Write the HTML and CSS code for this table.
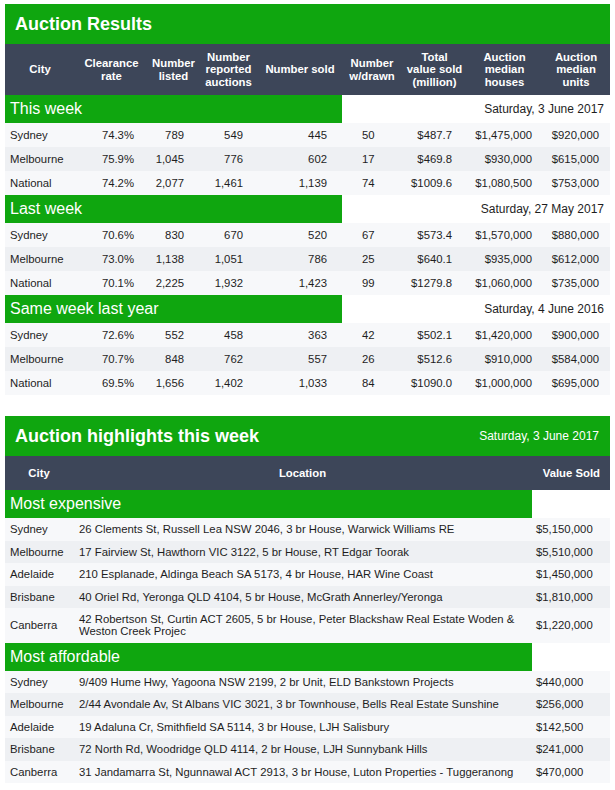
FILE: index.html
```html
<!DOCTYPE html>
<html lang="en">
<head>
<meta charset="utf-8">
<title>Auction Results</title>
<link rel="stylesheet" href="styles.css">
</head>
<body>
<div class="page">
  <section class="panel">
    <div class="panel-title"><h2>Auction Results</h2></div>
    <div class="res-row res-head">
      <div>City</div><div>Clearance rate</div><div>Number listed</div><div>Number reported auctions</div><div>Number sold</div><div>Number w/drawn</div><div>Total value sold (million)</div><div>Auction median houses</div><div>Auction median units</div>
    </div>
    <div class="group">
      <div class="group-bar res-bar"><span class="group-label">This week</span><span class="group-date">Saturday, 3 June 2017</span></div>
      <div class="res-row res-data"><div>Sydney</div><div>74.3%</div><div>789</div><div>549</div><div>445</div><div>50</div><div>$487.7</div><div>$1,475,000</div><div>$920,000</div></div>
      <div class="res-row res-data"><div>Melbourne</div><div>75.9%</div><div>1,045</div><div>776</div><div>602</div><div>17</div><div>$469.8</div><div>$930,000</div><div>$615,000</div></div>
      <div class="res-row res-data"><div>National</div><div>74.2%</div><div>2,077</div><div>1,461</div><div>1,139</div><div>74</div><div>$1009.6</div><div>$1,080,500</div><div>$753,000</div></div>
    </div>
    <div class="group">
      <div class="group-bar res-bar"><span class="group-label">Last week</span><span class="group-date">Saturday, 27 May 2017</span></div>
      <div class="res-row res-data"><div>Sydney</div><div>70.6%</div><div>830</div><div>670</div><div>520</div><div>67</div><div>$573.4</div><div>$1,570,000</div><div>$880,000</div></div>
      <div class="res-row res-data"><div>Melbourne</div><div>73.0%</div><div>1,138</div><div>1,051</div><div>786</div><div>25</div><div>$640.1</div><div>$935,000</div><div>$612,000</div></div>
      <div class="res-row res-data"><div>National</div><div>70.1%</div><div>2,225</div><div>1,932</div><div>1,423</div><div>99</div><div>$1279.8</div><div>$1,060,000</div><div>$735,000</div></div>
    </div>
    <div class="group">
      <div class="group-bar res-bar"><span class="group-label">Same week last year</span><span class="group-date">Saturday, 4 June 2016</span></div>
      <div class="res-row res-data"><div>Sydney</div><div>72.6%</div><div>552</div><div>458</div><div>363</div><div>42</div><div>$502.1</div><div>$1,420,000</div><div>$900,000</div></div>
      <div class="res-row res-data"><div>Melbourne</div><div>70.7%</div><div>848</div><div>762</div><div>557</div><div>26</div><div>$512.6</div><div>$910,000</div><div>$584,000</div></div>
      <div class="res-row res-data"><div>National</div><div>69.5%</div><div>1,656</div><div>1,402</div><div>1,033</div><div>84</div><div>$1090.0</div><div>$1,000,000</div><div>$695,000</div></div>
    </div>
  </section>

  <section class="panel">
    <div class="panel-title"><h2>Auction highlights this week</h2><span class="title-date">Saturday, 3 June 2017</span></div>
    <div class="hl-row hl-head"><div>City</div><div>Location</div><div>Value Sold</div></div>
    <div class="group">
      <div class="group-bar hl-bar"><span class="group-label">Most expensive</span><span class="group-date"></span></div>
      <div class="hl-row hl-data"><div>Sydney</div><div>26 Clements St, Russell Lea NSW 2046, 3 br House, Warwick Williams RE</div><div>$5,150,000</div></div>
      <div class="hl-row hl-data"><div>Melbourne</div><div>17 Fairview St, Hawthorn VIC 3122, 5 br House, RT Edgar Toorak</div><div>$5,510,000</div></div>
      <div class="hl-row hl-data"><div>Adelaide</div><div>210 Esplanade, Aldinga Beach SA 5173, 4 br House, HAR Wine Coast</div><div>$1,450,000</div></div>
      <div class="hl-row hl-data"><div>Brisbane</div><div>40 Oriel Rd, Yeronga QLD 4104, 5 br House, McGrath Annerley/Yeronga</div><div>$1,810,000</div></div>
      <div class="hl-row hl-data"><div>Canberra</div><div>42 Robertson St, Curtin ACT 2605, 5 br House, Peter Blackshaw Real Estate Woden &amp; Weston Creek Projec</div><div>$1,220,000</div></div>
    </div>
    <div class="group">
      <div class="group-bar hl-bar"><span class="group-label">Most affordable</span><span class="group-date"></span></div>
      <div class="hl-row hl-data"><div>Sydney</div><div>9/409 Hume Hwy, Yagoona NSW 2199, 2 br Unit, ELD Bankstown Projects</div><div>$440,000</div></div>
      <div class="hl-row hl-data"><div>Melbourne</div><div>2/44 Avondale Av, St Albans VIC 3021, 3 br Townhouse, Bells Real Estate Sunshine</div><div>$256,000</div></div>
      <div class="hl-row hl-data"><div>Adelaide</div><div>19 Adaluna Cr, Smithfield SA 5114, 3 br House, LJH Salisbury</div><div>$142,500</div></div>
      <div class="hl-row hl-data"><div>Brisbane</div><div>72 North Rd, Woodridge QLD 4114, 2 br House, LJH Sunnybank Hills</div><div>$241,000</div></div>
      <div class="hl-row hl-data"><div>Canberra</div><div>31 Jandamarra St, Ngunnawal ACT 2913, 3 br House, Luton Properties - Tuggeranong</div><div>$470,000</div></div>
    </div>
  </section>
</div>
</body>
</html>
```

FILE: styles.css
```css
html, body {
  margin: 0;
  padding: 0;
  background: #ffffff;
}

body {
  font-family: "Liberation Sans", Arial, sans-serif;
  font-size: 8.5pt;
  color: #1e1e1e;
}

.page {
  padding: 4px 5px;
  width: 605px;
  display: flex;
  flex-direction: column;
  gap: 21px;
}

.panel {
  display: flex;
  flex-direction: column;
}

.panel-title {
  background: #0fa60f;
  height: 40px;
  display: flex;
  align-items: center;
  justify-content: space-between;
  padding: 0 11px 0 10px;
}

.panel-title h2 {
  margin: 0;
  font-size: 18px;
  font-weight: 700;
  color: #ffffff;
}

.title-date {
  font-size: 12px;
  color: #ffffff;
}

/* results grid */
.res-row {
  display: grid;
  grid-template-columns: 70px 73px 51px 59px 84px 62px 61px 79px 66px;
  align-items: center;
}

.res-head,
.hl-head {
  background: #3d4659;
  color: #ffffff;
  font-weight: 700;
  line-height: 12.6px;
}

.res-head {
  height: 51px;
}

.res-head > div {
  text-align: center;
  padding: 0 2px;
}

.res-head > div:nth-child(6) {
  padding-right: 4px;
}

.res-head > div:nth-child(9) {
  padding-right: 4px;
}

.res-data > div {
  padding: 6px 0;
  line-height: 12px;
  text-align: right;
}

.res-data > div:nth-child(1) { text-align: left; padding-left: 5px; }
.res-data > div:nth-child(2) { padding-right: 14px; }
.res-data > div:nth-child(3),
.res-data > div:nth-child(4),
.res-data > div:nth-child(5) { padding-right: 15px; }
.res-data > div:nth-child(6) { text-align: left; padding-left: 20px; }
.res-data > div:nth-child(7) { padding-right: 13px; }
.res-data > div:nth-child(8) { padding-right: 12px; }
.res-data > div:nth-child(9) { padding-right: 11px; }

/* groups */
.group {
  display: flex;
  flex-direction: column;
}

.group > .res-row,
.group > .hl-row {
  background: #f7f8fa;
}

.group > .res-row:nth-child(odd),
.group > .hl-row:nth-child(odd) {
  background: #eef0f3;
}

.group-bar {
  display: grid;
  height: 28px;
  align-items: stretch;
  background: #ffffff;
}

.res-bar {
  grid-template-columns: 337px 1fr;
}

.hl-bar {
  grid-template-columns: 527px 1fr;
}

.group-label {
  background: #0fa60f;
  color: #ffffff;
  font-size: 16px;
  display: flex;
  align-items: center;
  padding-left: 5px;
}

.group-date {
  font-size: 12px;
  display: flex;
  align-items: center;
  justify-content: flex-end;
  padding-right: 6px;
  color: #1e1e1e;
}

/* highlights grid */
.hl-row {
  display: grid;
  grid-template-columns: 68px 459px 78px;
  align-items: center;
}

.hl-head {
  height: 34px;
}

.hl-head > div:nth-child(1),
.hl-head > div:nth-child(2) {
  text-align: center;
}

.hl-head > div:nth-child(3) {
  text-align: right;
  padding-right: 10px;
}

.hl-data > div {
  padding: 5.25px 0;
  line-height: 12px;
}

.hl-data > div:nth-child(1) { padding-left: 5px; }
.hl-data > div:nth-child(2) { padding-left: 6px; padding-right: 6px; }
.hl-data > div:nth-child(3) { padding-left: 4px; }
```
